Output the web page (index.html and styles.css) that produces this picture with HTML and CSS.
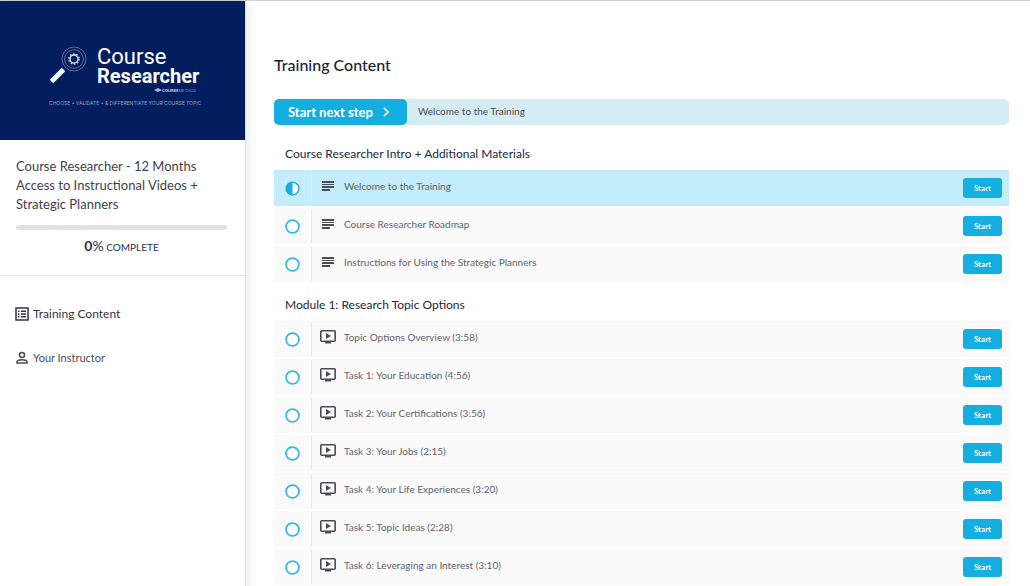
FILE: index.html
```
<!DOCTYPE html>
<html lang="en">
<head>
    <meta charset="UTF-8">
    <meta name="viewport" content="width=device-width, initial-scale=1.0">
    <title>Course Researcher - Training Content</title>
    <link rel="stylesheet" href="styles.css">
</head>
<body>
    <!-- shared icons -->
    <svg class="sprite" aria-hidden="true">
        <symbol id="icon-text" viewBox="0 0 16 14">
            <path d="M2 2h12v2H2zM2 5h12v1H2zM2 7h12v2H2zM2 10h8v2H2z" fill="currentColor"/>
        </symbol>
        <symbol id="icon-video" viewBox="0 0 16 14">
            <rect x="0.8" y="0.8" width="14.4" height="10.4" rx="1" fill="none" stroke="currentColor" stroke-width="1.6"/>
            <path d="M5 11h6v2.500H5zM6 3l5 3-5 3z" fill="currentColor"/>
        </symbol>
        <symbol id="icon-open" viewBox="0 0 15 15">
            <circle cx="7.5" cy="7.5" r="6.4" fill="#fff" stroke="#36b7e6" stroke-width="1.8"/>
        </symbol>
        <symbol id="icon-half" viewBox="0 0 15 15">
            <circle cx="7.5" cy="7.5" r="6.4" fill="#fff" stroke="#15aee0" stroke-width="1.4"/>
            <path d="M7.500 1a6.500 6.500 0 0 0 0 13z" fill="#15aee0"/>
        </symbol>
    </svg>

    <div class="page">
        <aside class="sidebar">
            <svg class="logo" viewBox="0 0 245 139" role="img" aria-label="Course Researcher">
                <g fill="none" stroke="#fff">
                    <circle cx="74" cy="58" r="12" stroke-width="0.8" opacity="0.45"/>
                    <circle cx="74" cy="58" r="9.3" stroke-width="0.8" opacity="0.45"/>
                    <circle cx="74" cy="58" r="4" stroke-width="1.3" opacity="0.9"/>
                    <circle cx="74" cy="58" r="5.2" stroke-width="1.3" stroke-dasharray="1.6 1.67" opacity="0.8"/>
                    <path d="M63.500 68.500 51.500 80.500" stroke="#f0fbfd" stroke-width="5"/>
                </g>
                <text class="logo-light" x="97" y="63">Course</text>
                <text class="logo-bold" x="97" y="82">Researcher</text>
                <path d="M154 89l4-2 4 2-4 2z" fill="#a9b3d4"/>
                <text class="logo-brand" x="162" y="91"><tspan class="brand-bold">COURSE</tspan>METHOD</text>
                <text class="logo-tagline" x="49" y="104">CHOOSE • VALIDATE • &amp; DIFFERENTIATE YOUR COURSE TOPIC</text>
            </svg>

            <div class="course">
                <h1>Course Researcher - 12 Months Access to Instructional Videos + Strategic Planners</h1>
                <div class="progress" role="progressbar" aria-label="Course progress" aria-valuenow="0" aria-valuemin="0" aria-valuemax="100"></div>
                <p class="complete"><span class="percent"><b>0</b>%</span> COMPLETE</p>
            </div>

            <nav class="menu">
                <a href="#" class="active">
                    <svg width="14" height="14" viewBox="0 0 14 14" aria-hidden="true">
                        <rect x="1" y="1" width="12" height="12" fill="none" stroke="currentColor" stroke-width="1.5"/>
                        <path d="M3 3.500h1.500v1.500H3zM3 6.300h1.500v1.500H3zM3 9h1.500v1.500H3zM6 3.500h5v1.500H6zM6 6.300h5v1.500H6zM6 9h5v1.500H6z" fill="currentColor"/>
                    </svg>
                    Training Content
                </a>
                <a href="#">
                    <svg width="14" height="14" viewBox="0 0 14 14" fill="none" stroke="currentColor" stroke-width="1.6" aria-hidden="true">
                        <circle cx="7" cy="4" r="2.500"/>
                        <path d="M2 12v-1c0-1.500 2.500-2.300 5-2.300s5 .8 5 2.300v1z"/>
                    </svg>
                    Your Instructor
                </a>
            </nav>
        </aside>

        <main class="content">
            <h2>Training Content</h2>

            <div class="next-step">
                <button type="button">
                    Start next step
                    <svg width="6" height="10" viewBox="0 0 6 10" aria-hidden="true"><path d="M1 1l4 4-4 4" fill="none" stroke="currentColor" stroke-width="1.7"/></svg>
                </button>
                <span>Welcome to the Training</span>
            </div>

            <section>
                <h3>Course Researcher Intro + Additional Materials</h3>
                <ul class="lessons">
                    <li class="current">
                        <svg class="status"><use href="#icon-half"/></svg>
                        <a href="#"><svg class="type"><use href="#icon-text"/></svg>Welcome to the Training</a>
                        <button type="button">Start</button>
                    </li>
                    <li>
                        <svg class="status"><use href="#icon-open"/></svg>
                        <a href="#"><svg class="type"><use href="#icon-text"/></svg>Course Researcher Roadmap</a>
                        <button type="button">Start</button>
                    </li>
                    <li>
                        <svg class="status"><use href="#icon-open"/></svg>
                        <a href="#"><svg class="type"><use href="#icon-text"/></svg>Instructions for Using the Strategic Planners</a>
                        <button type="button">Start</button>
                    </li>
                </ul>
            </section>

            <section>
                <h3>Module 1: Research Topic Options</h3>
                <ul class="lessons">
                    <li>
                        <svg class="status"><use href="#icon-open"/></svg>
                        <a href="#"><svg class="type"><use href="#icon-video"/></svg>Topic Options Overview (3:58)</a>
                        <button type="button">Start</button>
                    </li>
                    <li>
                        <svg class="status"><use href="#icon-open"/></svg>
                        <a href="#"><svg class="type"><use href="#icon-video"/></svg>Task 1: Your Education (4:56)</a>
                        <button type="button">Start</button>
                    </li>
                    <li>
                        <svg class="status"><use href="#icon-open"/></svg>
                        <a href="#"><svg class="type"><use href="#icon-video"/></svg>Task 2: Your Certifications (3:56)</a>
                        <button type="button">Start</button>
                    </li>
                    <li>
                        <svg class="status"><use href="#icon-open"/></svg>
                        <a href="#"><svg class="type"><use href="#icon-video"/></svg>Task 3: Your Jobs (2:15)</a>
                        <button type="button">Start</button>
                    </li>
                    <li>
                        <svg class="status"><use href="#icon-open"/></svg>
                        <a href="#"><svg class="type"><use href="#icon-video"/></svg>Task 4: Your Life Experiences (3:20)</a>
                        <button type="button">Start</button>
                    </li>
                    <li>
                        <svg class="status"><use href="#icon-open"/></svg>
                        <a href="#"><svg class="type"><use href="#icon-video"/></svg>Task 5: Topic Ideas (2:28)</a>
                        <button type="button">Start</button>
                    </li>
                    <li>
                        <svg class="status"><use href="#icon-open"/></svg>
                        <a href="#"><svg class="type"><use href="#icon-video"/></svg>Task 6: Leveraging an Interest (3:10)</a>
                        <button type="button">Start</button>
                    </li>
                </ul>
            </section>
        </main>
    </div>
</body>
</html>
```

FILE: styles.css
```
* {
    margin: 0;
    padding: 0;
    box-sizing: border-box;
}

body {
    font-family: Lato, "Open Sans", sans-serif;
    font-size: 12px;
    color: #4d4d58;
    background: #fff;
}

a {
    color: inherit;
    text-decoration: none;
}

button {
    font-family: inherit;
    font-weight: 700;
    color: #fff;
    background: #15aee0;
    border: none;
    border-radius: 4px;
    cursor: pointer;
}

.sprite {
    display: none;
}

.page {
    display: flex;
    min-height: 100vh;
    border-top: 1px solid #d2d3d6;
}

/* sidebar */
.sidebar {
    flex: 0 0 246px;
    border-right: 1px solid #dcdcde;
    box-shadow: 2px 0 12px rgba(0, 0, 0, 0.08);
}

.logo {
    display: block;
    width: 100%;
    background: #021e5f;
}

.logo text {
    font-family: Roboto, sans-serif;
    fill: #fff;
}

.logo .logo-light {
    font-size: 22px;
    font-weight: 400;
}

.logo .logo-bold {
    font-size: 20px;
    font-weight: 700;
}

.logo .logo-brand {
    font-family: Inter, sans-serif;
    font-size: 4px;
    fill: #8f9bc4;
}

.logo .brand-bold {
    font-weight: 700;
    fill: #c3cae2;
}

.logo .logo-tagline {
    font-family: Inter, sans-serif;
    font-size: 5px;
    fill: #98a3c8;
}

.course {
    padding: 17px 18px 19px 16px;
    border-bottom: 1px solid #e0e2e3;
}

.course h1 {
    font-size: 13px;
    font-weight: 400;
    line-height: 19px;
    color: #3f3f4c;
}

.progress {
    height: 5px;
    margin-top: 11px;
    border-radius: 3px;
    background: #e0e2e2;
}

.complete {
    margin-top: 7px;
    font-size: 10px;
    line-height: 18px;
    text-align: center;
    color: #2c2f45;
}

.percent {
    font-size: 14px;
}

.menu {
    display: flex;
    flex-direction: column;
    gap: 26px;
    padding: 29px 15px;
}

.menu a {
    display: flex;
    align-items: center;
    gap: 4px;
    font-size: 11px;
    line-height: 18px;
}

.menu .active {
    font-size: 12px;
    color: #33333f;
}

/* main column */
.content {
    flex: 1;
    min-width: 0;
    padding: 54px 21px 20px 28px;
}

.content h2 {
    font-size: 16px;
    font-weight: 500;
    line-height: 20px;
    color: #1b2340;
}

.next-step {
    display: flex;
    align-items: center;
    height: 26px;
    margin: 24px 0 6px;
    border-radius: 5px;
    background: #d4edf5;
}

.next-step button {
    display: flex;
    align-items: center;
    justify-content: space-between;
    width: 133px;
    height: 26px;
    padding: 0 18px 0 14px;
    border-radius: 5px;
    font-size: 13px;
}

.next-step span {
    padding: 0 11px 2px;
    font-size: 10px;
}

.content h3 {
    padding: 12px 11px 6px;
    font-size: 12px;
    font-weight: 400;
    line-height: 21px;
    color: #22263f;
}

.lessons {
    display: grid;
    gap: 2px;
    list-style: none;
}

.lessons li {
    display: flex;
    align-items: center;
    height: 36px;
    padding-right: 7px;
    background: #fafafa;
}

.lessons .current {
    background: #c3edfa;
}

.lessons .status {
    width: 15px;
    height: 15px;
    margin: 0 11px;
}

.lessons a {
    display: flex;
    flex: 1;
    align-items: center;
    gap: 8px;
    height: 34px;
    padding: 0 8px 4px;
    border-left: 1px solid #d3eff8;
    font-size: 10px;
    color: #62626b;
}

.lessons .type {
    width: 16px;
    height: 14px;
    color: #4a4b57;
}

.lessons button {
    width: 39px;
    height: 20px;
    border-radius: 3px;
    font-size: 8px;
}
```
